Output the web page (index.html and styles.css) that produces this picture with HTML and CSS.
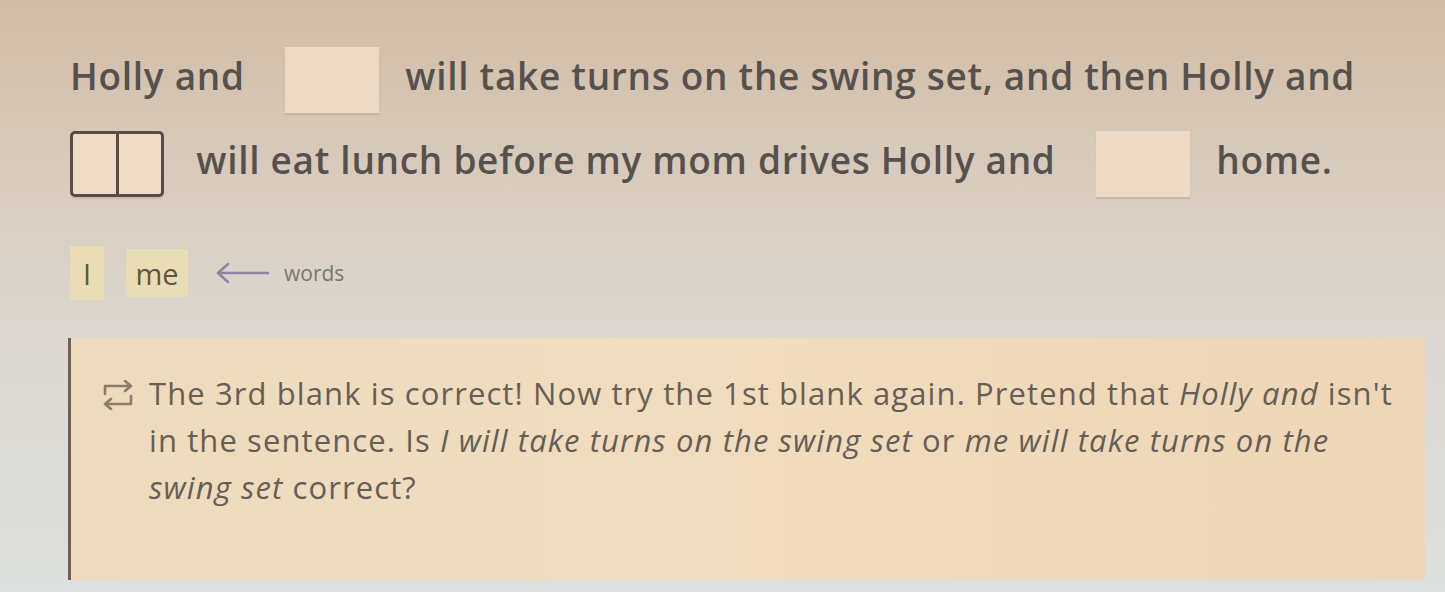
FILE: index.html
```html
<!DOCTYPE html>
<html lang="en">
    <head>
        <meta charset="UTF-8">
        <title>Pronoun practice</title>
        <link rel="stylesheet" href="styles.css">
    </head>

    <body>
        <div id="exercise">
            <p class="sentence">
                Holly and <span class="blank"></span> will take turns on the swing set, and then Holly and<br>
                <span class="blank focused"><span class="half"></span><span class="half"></span></span> will eat lunch before my mom drives Holly and <span class="blank"></span> home.
            </p>

            <div id="word-bank">
                <span class="chip">I</span>
                <span class="chip">me</span>
                <svg class="bank-arrow" width="56" height="24" viewBox="0 0 56 24">
                    <path d="M54 12 H4 M14 3 L4 12 L14 21" fill="none" stroke="#8c84a0" stroke-width="2.5" stroke-linecap="round" stroke-linejoin="round"/>
                </svg>
                <span class="bank-label">words</span>
            </div>

            <div id="feedback">
                <svg class="retry-icon" width="34" height="30" viewBox="0 0 34 30">
                    <path d="M4 14 V6 H30 M24 1 L30 6 L24 11 M30 16 V24 H4 M10 19 L4 24 L10 29" fill="none" stroke="#8c7b68" stroke-width="2.6" stroke-linecap="round" stroke-linejoin="round"/>
                </svg>
                <p class="feedback-text">The 3rd blank is correct! Now try the 1st blank again. Pretend that <em>Holly and</em> isn't<br>in the sentence. Is <em>I will take turns on the swing set</em> or <em>me will take turns on the</em><br><em>swing set</em> correct?</p>
            </div>
        </div>
    </body>
</html>
```

FILE: styles.css
```css
body {
    margin: 0;
    padding: 0;
    height: 592px;
    overflow: hidden;
    font-family: "Open Sans", "Noto Sans", sans-serif;
    color: #57514d;
    background: linear-gradient(180deg, #d2bca6 0%, #d8cbbd 30%, #dcd7cf 55%, #dde0de 100%);
}

#exercise {
    padding: 34px 20px 0 70px;
}

.sentence {
    margin: 0;
    font-size: 37px;
    font-weight: 600;
    line-height: 84px;
    white-space: nowrap;
    letter-spacing: 0.7px;
}

.blank {
    display: inline-block;
    width: 94px;
    height: 66px;
    margin: 0 16px 0 30px;
    vertical-align: middle;
    background: #efdac6;
    box-shadow: 0 2px 1px rgba(110, 90, 70, 0.15);
}

.blank.focused {
    display: inline-flex;
    margin: 0 22px 0 0;
    box-sizing: border-box;
    border: 3px solid #5a4c46;
    border-radius: 5px;
    background: #eedcc9;
}

.half {
    flex: 1;
}

.half:first-child {
    border-right: 3px solid #5a4c46;
}

#word-bank {
    display: flex;
    align-items: center;
    gap: 22px;
    margin-top: 44px;
    height: 54px;
}

.chip {
    display: flex;
    align-items: center;
    justify-content: center;
    height: 54px;
    min-width: 30px;
    padding: 0 2px;
    font-size: 29px;
    font-weight: 500;
    color: #5e5648;
    background: #e9ddb6;
}

.chip + .chip {
    min-width: 58px;
    height: 48px;
}

.bank-arrow {
    margin-left: 4px;
}

.bank-label {
    margin-left: -8px;
    font-size: 21px;
    color: #7b7774;
}

#feedback {
    display: flex;
    align-items: flex-start;
    gap: 14px;
    margin: 38px 0 0 -2px;
    width: 1357px;
    height: 242px;
    box-sizing: border-box;
    padding: 32px 20px 0 30px;
    border-left: 3px solid #6c6259;
    background: linear-gradient(90deg, #eedbbd 0%, #f1dcbe 50%, #eed6b6 100%);
}

.retry-icon {
    flex: none;
    margin-top: 10px;
}

.feedback-text {
    margin: 0;
    font-size: 31px;
    font-weight: 500;
    line-height: 47px;
    white-space: nowrap;
    letter-spacing: 1.1px;
    color: #675e56;
}

.feedback-text em {
    font-style: italic;
}
```
